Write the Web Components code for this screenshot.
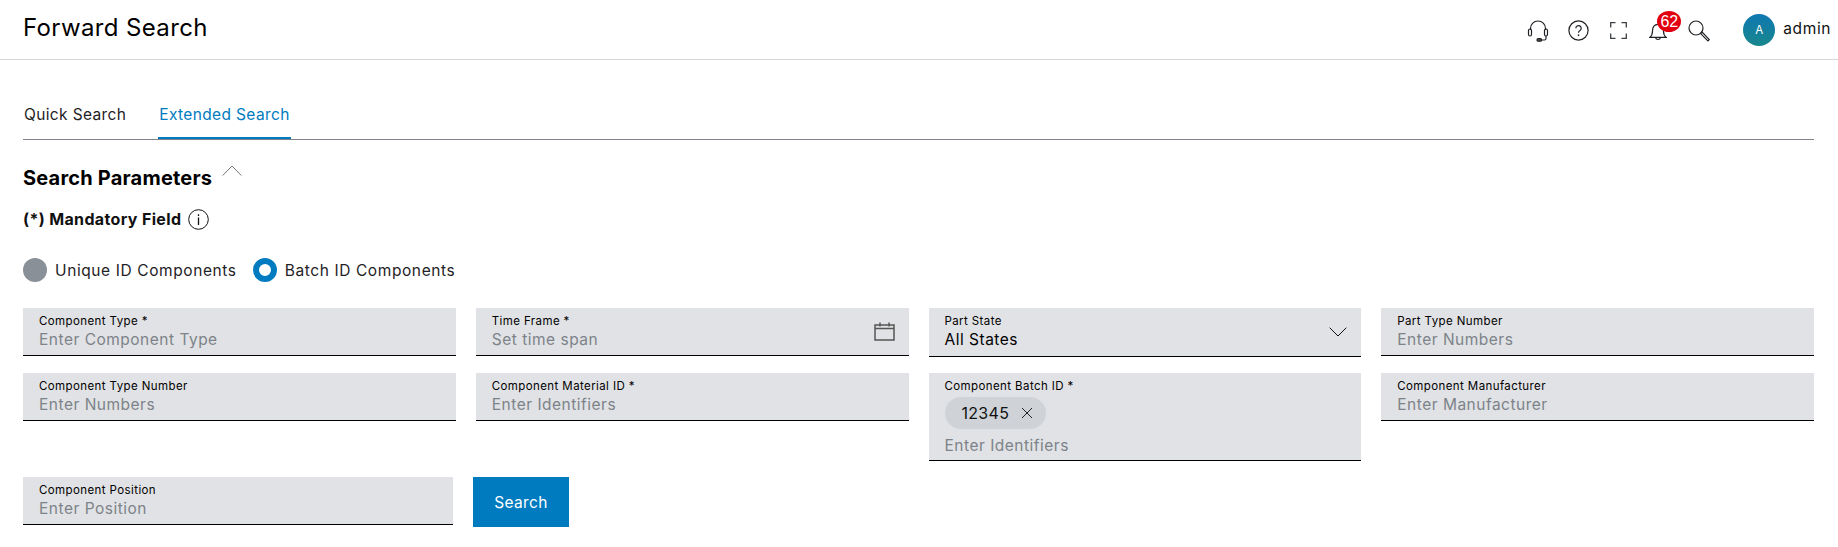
<!DOCTYPE html>
<html lang="en">
<head>
<meta charset="utf-8">
<title>Forward Search</title>
<style>
  html, body { margin: 0; padding: 0; background: #fff; }
  body { font-family: Inter, Roboto, sans-serif; color: #000; }
</style>
</head>
<body>
<app-header page-title="Forward Search"></app-header>
<search-tabs></search-tabs>
<search-form></search-form>

<script>
// Small helper so every element sets up its shadow root the same way
function shadow(el, html) {
  el.attachShadow({mode: 'open'}).innerHTML = html;
}

const FONT = 'Inter, Roboto, sans-serif';

class AppHeader extends HTMLElement {
  connectedCallback() {
    shadow(this, `
      <style>
        :host { display: flex; align-items: center; box-sizing: border-box; height: 60px;
                padding: 0 7px 0 23px; border-bottom: 1px solid #d4d6d8; font-family: ${FONT}; }
        h1 { flex: 1; margin: 0 0 5px; font-size: 24px; font-weight: 400; letter-spacing: .37px; color: #000; }
        .icons { display: flex; align-items: center; }
        svg { display: block; fill: none; stroke: #1f2225; stroke-width: 1.2; margin-top: 2px; }
        .bell { position: relative; width: 18px; height: 20px; margin: 2px 21px 0 22px; }
        .bell svg { margin: 0; }
        .badge { position: absolute; left: 8px; top: -10px; width: 24px; height: 21px; border-radius: 50%;
                 background: #e2000f; color: #fff; font: 16px/21px "Liberation Sans", sans-serif; text-align: center; }
        .avatar { width: 32px; height: 32px; border-radius: 50%; margin: 0 8px 0 33px; color: #fff; font-size: 11.5px;
                  line-height: 32px; text-align: center; background: linear-gradient(#0f78b2, #18878c); }
        .name { font-size: 15.5px; letter-spacing: .6px; color: #111; margin-bottom: 2px; }
      </style>
      <h1>${this.getAttribute('page-title')}</h1>
      <div class="icons">
        <svg width="22" height="22" viewBox="0 0 22 22" style="margin-right:19px">
          <path d="M3.5 10V8.5a7.5 7.5 0 0 1 15 0V10"/>
          <rect x="1.5" y="9" width="3" height="7" rx="1.5"/>
          <rect x="17.5" y="9" width="3" height="7" rx="1.5"/>
          <path d="M19 16v2.5a1.5 1.5 0 0 1-1.5 1.5H14"/>
          <rect x="10" y="18.6" width="4.6" height="2.6" rx="1.3" fill="#555"/>
        </svg>
        <svg width="21" height="21" viewBox="0 0 21 21" style="margin-right:21px">
          <circle cx="10.5" cy="10.5" r="9.6"/>
          <path d="M7.8 8.2a2.7 2.7 0 1 1 4.2 2.3c-1 .6-1.5 1.1-1.500 2.300"/>
          <path d="M10.5 14.4v1.6" stroke-width="1.4"/>
        </svg>
        <svg width="17" height="17" viewBox="0 0 17 17" style="stroke:#3c4044;stroke-width:1.300">
          <path d="M.7 5.500V.7H5.500M11.500 .7h4.800V5.500M16.300 11.500v4.800H11.500M5.500 16.300H.7V11.500"/>
        </svg>
        <div class="bell">
          <svg width="18" height="20" viewBox="0 0 18 20">
            <path d="M.8 16.4c2-1.6 2.7-3 2.7-6.200 0-4.200 2.200-6.900 5.500-6.900s5.500 2.700 5.500 6.900c0 3.200.7 4.600 2.700 6.200z"/>
            <path d="M6.500 16.600a2.600 2.600 0 0 0 5 0"/>
          </svg>
          <span class="badge">62</span>
        </div>
        <svg width="22" height="22" viewBox="0 0 22 22">
          <circle cx="8" cy="8" r="7"/>
          <path d="M13 13l1.300-.7 7 7.300-1.400 1.400-7-7.200z"/>
        </svg>
        <div class="avatar">A</div>
        <span class="name">admin</span>
      </div>`);
  }
}

class SearchTabs extends HTMLElement {
  connectedCallback() {
    shadow(this, `
      <style>
        :host { display: flex; box-sizing: border-box; height: 41px; margin: 39px 24px 0 23px; gap: 31px;
                border-bottom: 1px solid #7d8389; font-family: ${FONT}; font-size: 15.5px; letter-spacing: .36px; }
        div { padding: 6px 1px 0; box-sizing: border-box; height: 40px; color: #1f2225; }
        .on { color: #007bc0; border-bottom: 2px solid #007bc0; }
      </style>
      <div>Quick Search</div><div class="on">Extended Search</div>`);
  }
}

class RadioOption extends HTMLElement {
  connectedCallback() {
    const on = this.hasAttribute('checked');
    shadow(this, `
      <style>
        :host { display: inline-flex; align-items: center; gap: 8px; font-family: ${FONT}; font-size: 15.5px;
                letter-spacing: .6px; color: #1f2225; }
        i { display: block; box-sizing: border-box; width: 24px; height: 24px; border-radius: 50%; background: #8a9097; }
        i.on { background: #fff; border: 6.500px solid #007bc0; }
      </style>
      <i class="${on ? 'on' : ''}"></i><slot></slot>`);
  }
}

class FormField extends HTMLElement {
  connectedCallback() {
    shadow(this, `
      <style>
        :host { display: block; position: relative; box-sizing: border-box; min-height: 48px; padding: 5px 16px 0;
                background: #e0e2e5; border-bottom: 1px solid #000; font-family: ${FONT}; }
        label { display: block; font-size: 11.500px; line-height: 16px; letter-spacing: .4px; color: #000; }
        .value { font-size: 15.5px; line-height: 21px; letter-spacing: .5px; color: #7d8389; white-space: nowrap; }
        :host([filled]) .value { color: #000; }
        ::slotted(svg) { position: absolute; right: 14px; top: 14px; }
        ::slotted(value-chip) { margin: 3px 0 6px; }
      </style>
      <label>${this.getAttribute('label')}</label>
      <slot></slot>
      <div class="value">${this.getAttribute('value')}</div>`);
  }
}

class ValueChip extends HTMLElement {
  connectedCallback() {
    shadow(this, `
      <style>
        :host { display: flex; width: fit-content; align-items: center; gap: 12px; box-sizing: border-box; height: 32px;
                padding: 0 13px 0 17px; border-radius: 16px; background: #cfd3d7; font-family: ${FONT};
                font-size: 16px; letter-spacing: .3px; color: #111; }
        svg { display: block; stroke: #222; stroke-width: 1; fill: none; }
      </style>
      <slot></slot>
      <svg width="12" height="12" viewBox="0 0 12 12"><path d="M1 1l10 10M11 1L1 11"/></svg>`);
  }
}

class SearchForm extends HTMLElement {
  connectedCallback() {
    shadow(this, `
      <style>
        :host { display: block; margin: 0 24px 0 23px; font-family: ${FONT}; }
        .head { display: flex; align-items: flex-start; height: 28px; margin-top: 25px; }
        h2 { margin: 0; font-size: 20px; line-height: 26px; font-weight: 700; letter-spacing: .2px; color: #000; }
        .head svg { margin: 0 0 0 10px; fill: none; stroke: #71767c; stroke-width: 1; }
        .mand { display: flex; align-items: center; gap: 7px; height: 24px; margin-top: 14px; font-size: 16px;
                font-weight: 700; letter-spacing: .35px; color: #111; }
        .mand svg { fill: none; stroke: #111; stroke-width: 1; }
        .radios { display: flex; gap: 16px; margin-top: 27px; height: 24px; }
        .grid { display: grid; grid-template-columns: repeat(4, 1fr); gap: 16px 20px; align-items: start; margin-top: 26px; }
        .last { display: flex; align-items: flex-start; gap: 20px; margin-top: 16px; }
        .last form-field { width: 430px; }
        button { width: 96px; height: 50px; border: 0; padding: 0; background: #007bc0; color: #fff;
                 font: 15.5px ${FONT}; letter-spacing: .36px; }
        .tall { height: 49px; }
      </style>
      <div class="head">
        <h2>Search Parameters</h2>
        <svg width="20" height="11" viewBox="0 0 20 11"><path d="M.7 10.500L10 1l9.300 9.500"/></svg>
      </div>
      <div class="mand">(*) Mandatory Field
        <svg width="21" height="21" viewBox="0 0 21 21"><circle cx="10.500" cy="10.500" r="9.800"/><path d="M10.500 8.500v7.500M10.500 5.300v1.700" stroke-width="1.300"/></svg>
      </div>
      <div class="radios">
        <radio-option>Unique ID Components</radio-option>
        <radio-option checked>Batch ID Components</radio-option>
      </div>
      <div class="grid">
        <form-field label="Component Type *" value="Enter Component Type"></form-field>
        <form-field label="Time Frame *" value="Set time span">
          <svg width="21" height="19" viewBox="0 0 21 19" fill="none" stroke="#555" stroke-width="1.500">
            <path d="M1 3h19v15H1zM1 6.500h19M6 .5v4M15 .5v4"/>
          </svg>
        </form-field>
        <form-field class="tall" label="Part State" value="All States" filled>
          <svg width="18" height="10" viewBox="0 0 18 10" fill="none" stroke="#111" stroke-width="1" style="top:19px">
            <path d="M.7 .7L9 9l8.300-8.300"/>
          </svg>
        </form-field>
        <form-field label="Part Type Number" value="Enter Numbers"></form-field>
        <form-field label="Component Type Number" value="Enter Numbers"></form-field>
        <form-field label="Component Material ID *" value="Enter Identifiers"></form-field>
        <form-field label="Component Batch ID *" value="Enter Identifiers" style="height:88px">
          <value-chip>12345</value-chip>
        </form-field>
        <form-field label="Component Manufacturer" value="Enter Manufacturer"></form-field>
      </div>
      <div class="last">
        <form-field label="Component Position" value="Enter Position"></form-field>
        <button>Search</button>
      </div>`);
  }
}

customElements.define('app-header', AppHeader);
customElements.define('search-tabs', SearchTabs);
customElements.define('radio-option', RadioOption);
customElements.define('form-field', FormField);
customElements.define('value-chip', ValueChip);
customElements.define('search-form', SearchForm);
</script>
</body>
</html>
